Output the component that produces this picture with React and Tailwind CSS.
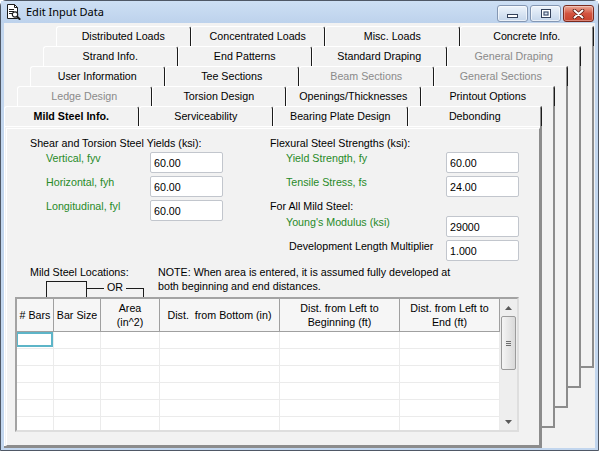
import clsx from 'clsx';

const tabRows = [
  [{ label: 'Distributed Loads' }, { label: 'Concentrated Loads' }, { label: 'Misc. Loads' }, { label: 'Concrete Info.' }],
  [{ label: 'Strand Info.' }, { label: 'End Patterns' }, { label: 'Standard Draping' }, { label: 'General Draping', disabled: true }],
  [{ label: 'User Information' }, { label: 'Tee Sections' }, { label: 'Beam Sections', disabled: true }, { label: 'General Sections', disabled: true }],
  [{ label: 'Ledge Design', disabled: true }, { label: 'Torsion Design' }, { label: 'Openings/Thicknesses' }, { label: 'Printout Options' }],
  [{ label: 'Mild Steel Info.', active: true }, { label: 'Serviceability' }, { label: 'Bearing Plate Design' }, { label: 'Debonding' }],
];

const columns = [
  { w: 'w-[37px]', label: '# Bars' },
  { w: 'w-[47px]', label: 'Bar Size' },
  { w: 'w-[59px]', label: <>Area<br />(in^2)</> },
  { w: 'w-[120px]', label: 'Dist.\u00a0 from Bottom (in)' },
  { w: 'w-[120px]', label: <>Dist. from Left to<br />Beginning (ft)</> },
  { w: 'w-[100px]', label: <>Dist. from Left to<br />End (ft)</> },
];

const TitleBar = () => (
  <div className="flex h-[22px] items-start bg-gradient-to-b from-[#cddff4] to-[#bdd2ec]">
    {/* document + magnifier icon */}
    <svg className="ml-[4px] mt-[3px]" width="16" height="16" viewBox="0 0 16 16">
      <path d="M2.5 .5h7l3 3v11h-10z" fill="#fff" stroke="#1c1c1c" />
      <path d="M9.5 .5v3h3" fill="none" stroke="#1c1c1c" />
      <path d="M4 5.5h5M4 7.5h5M4 9.5h3" stroke="#1c1c1c" />
      <circle cx="10" cy="10.5" r="2.7" fill="#fff" stroke="#1c1c1c" strokeWidth="1.2" />
      <path d="M12 12.5l3.2 3.2" stroke="#1c1c1c" strokeWidth="2" />
    </svg>
    <div className="ml-[5px] pt-[3px] font-['Noto_Sans',sans-serif] text-[11px] leading-[16px] text-black">Edit Input Data</div>

    <div className="ml-auto mr-[4px] mt-[4px] flex gap-[2px]">
      <div className="flex h-[17px] w-[31px] items-end justify-center rounded-[3px] border border-[#8497b3] bg-gradient-to-b from-[#eef4fb] via-[#d9e5f3] to-[#c5d6eb] pb-[3px] shadow-[inset_0_0_0_1px_rgba(255,255,255,0.6)]">
        <svg width="11" height="4" viewBox="0 0 11 4">
          <rect x=".5" y=".5" width="10" height="3" fill="#fff" stroke="#33415a" />
        </svg>
      </div>
      <div className="flex h-[17px] w-[31px] items-center justify-center rounded-[3px] border border-[#8497b3] bg-gradient-to-b from-[#eef4fb] via-[#d9e5f3] to-[#c5d6eb] shadow-[inset_0_0_0_1px_rgba(255,255,255,0.6)]">
        <svg width="10" height="9" viewBox="0 0 10 9">
          <rect x=".5" y=".5" width="9" height="8" fill="none" stroke="#33415a" />
          <rect x="1.5" y="1.5" width="7" height="6" fill="none" stroke="#fff" />
          <rect x="3" y="3" width="4" height="3" fill="none" stroke="#33415a" />
        </svg>
      </div>
      <div className="flex h-[17px] w-[31px] items-center justify-center rounded-[3px] border border-[#7a2a1e] bg-gradient-to-b from-[#eaa897] via-[#d35440] to-[#c8432d] shadow-[inset_0_0_0_1px_rgba(255,255,255,0.35)]">
        <svg width="13" height="10" viewBox="0 0 13 10">
          <path d="M2.5 1.5l8 7M10.5 1.5l-8 7" stroke="#5a1a10" strokeWidth="3.6" strokeLinecap="round" />
          <path d="M2.5 1.5l8 7M10.5 1.5l-8 7" stroke="#fff" strokeWidth="2" strokeLinecap="round" />
        </svg>
      </div>
    </div>
  </div>
);

const TabRow = ({ tabs }) => (
  <div className="-mr-[2px] grid h-[20px] grid-cols-4">
    {tabs.map((tab) => (
      <div
        key={tab.label}
        className={clsx(
          'flex items-center justify-center whitespace-nowrap rounded-t-[3px] border-t border-r border-l border-t-white border-r-[#1c1c1c] border-l-white text-[10.7px] leading-[13px]',
          tab.disabled ? 'text-[#8a8a8a]' : 'text-black',
          tab.active && 'font-bold'
        )}
      >
        {tab.label}
      </div>
    ))}
  </div>
);

const Field = ({ label, value, labelWidth, indent = 'pl-[16px]', green = true }) => (
  <div className="flex h-[21px]">
    <div className={clsx(labelWidth, indent, 'leading-[13px]', green ? 'text-[#288a28]' : 'text-black')}>{label}</div>
    <input
      readOnly
      value={value}
      className="h-[21px] w-[73px] rounded-[2px] border border-[#c2c6cd] bg-white pl-[3px] text-[10.7px] text-black outline-none"
    />
  </div>
);

const Bracket = () => (
  <div className="ml-[16px] mt-[2px] flex h-[16px] items-start">
    <div className="h-[16px] w-[41px] border-t border-r border-l border-[#1c1c1c]" />
    <div className="mt-[7px] flex items-start">
      <div className="w-[17px] border-t border-[#1c1c1c]" />
      <span className="-mt-[7px] px-[3px] leading-[13px]">OR</span>
      <div className="h-[9px] w-[18px] border-t border-r border-[#1c1c1c]" />
    </div>
  </div>
);

const LocationsTable = () => (
  <div className="flex h-[135px] w-[504px] border-2 border-t-[#a3a3a3] border-r-[#dedede] border-b-[#dedede] border-l-[#a3a3a3]">
    <div className="flex flex-col overflow-hidden">
      <div className="flex h-[33px] shrink-0 border-b border-[#a0a0a0] bg-[#f6f6f6]">
        {columns.map((col, i) => (
          <div key={i} className={clsx(col.w, 'flex shrink-0 items-center justify-center border-r border-[#a0a0a0] text-center leading-[14px]')}>
            {col.label}
          </div>
        ))}
      </div>
      {[0, 1, 2, 3, 4, 5].map((row) => (
        <div key={row} className="flex h-[17px] shrink-0 border-b border-[#ebebeb] bg-white">
          {columns.map((col, i) => (
            <div key={i} className={clsx(col.w, 'shrink-0 border-r border-[#ebebeb]')}>
              {row === 0 && i === 0 && <div className="-ml-[1px] h-[15px] w-[37px] border-2 border-[#5db5c8]" />}
            </div>
          ))}
        </div>
      ))}
    </div>

    {/* vertical scrollbar */}
    <div className="flex w-[17px] shrink-0 flex-col bg-[#eeeeee]">
      <div className="flex h-[17px] items-center justify-center">
        <svg width="7" height="4" viewBox="0 0 7 4"><path d="M0 4L3.5 0 7 4z" fill="#5a5a5a" /></svg>
      </div>
      <div className="mx-[1px] flex h-[54px] items-center justify-center rounded-[2px] border border-[#9b9b9b] bg-gradient-to-r from-[#f5f5f5] to-[#d9d9d9]">
        <div className="flex w-[5px] flex-col gap-[1px]">
          <div className="h-px bg-[#6e6e6e]" />
          <div className="h-px bg-[#6e6e6e]" />
          <div className="h-px bg-[#6e6e6e]" />
        </div>
      </div>
      <div className="flex-1" />
      <div className="flex h-[17px] items-center justify-center">
        <svg width="7" height="4" viewBox="0 0 7 4"><path d="M0 0L3.5 4 7 0z" fill="#5a5a5a" /></svg>
      </div>
    </div>
  </div>
);

const MildSteelPanel = () => (
  <div className="h-[320px] border-t border-l border-white">
    <div className="ml-[1px] mt-[1px] h-[318px] border border-t-white border-r-[#8c8c8c] border-b-[#8c8c8c] border-l-white px-[8px] pt-[8px] text-[10.7px] text-black">
      <div className="flex pl-[15px]">
        <div className="flex w-[240px] flex-col gap-[3px]">
          <div className="h-[12px] leading-[12px]">Shear and Torsion Steel Yields (ksi):</div>
          <Field label="Vertical, fyv" value="60.00" labelWidth="w-[120px]" />
          <Field label="Horizontal, fyh" value="60.00" labelWidth="w-[120px]" />
          <Field label="Longitudinal, fyl" value="60.00" labelWidth="w-[120px]" />
        </div>
        <div className="flex flex-col gap-[3px]">
          <div className="h-[12px] leading-[12px]">Flexural Steel Strengths (ksi):</div>
          <Field label="Yield Strength, fy" value="60.00" labelWidth="w-[176px]" />
          <Field label="Tensile Stress, fs" value="24.00" labelWidth="w-[176px]" />
          <div className="h-[13px] leading-[13px]">For All Mild Steel:</div>
          <Field label="Young's Modulus (ksi)" value="29000" labelWidth="w-[176px]" />
          <Field label="Development Length Multiplier" value="1.000" labelWidth="w-[176px]" indent="pl-[19px]" green={false} />
        </div>
      </div>

      <div className="mt-[4px] flex pl-[15px]">
        <div className="w-[128px]">
          <div className="h-[14px] leading-[14px]">Mild Steel Locations:</div>
          <Bracket />
        </div>
        <div className="leading-[14px]">
          NOTE: When area is entered, it is assumed fully developed at
          <br />
          both beginning and end distances.
        </div>
      </div>

      <LocationsTable />
    </div>
  </div>
);

const Page = ({ level }) => {
  const isFront = level === tabRows.length - 1;
  return (
    <div className={clsx('h-[342px] w-[538px] border-r-2 border-b-2 border-[#8c8c8c] bg-[#f2f2f2]', level === 0 ? 'ml-[52px]' : '-ml-[13px]')}>
      <TabRow tabs={tabRows[level]} />
      {isFront ? <MildSteelPanel /> : <Page level={level + 1} />}
    </div>
  );
};

export default function App() {
  return (
    <div className="h-[451px] w-[599px] font-['Liberation_Sans',Arial,sans-serif]">
      <div className="flex h-full w-full flex-col rounded-t-[6px] border border-[#4f5866] bg-[#c2d6ee]">
        <TitleBar />
        <div className="mx-[3px] h-[425px] bg-[#f2f2f2] pt-[3px]">
          <Page level={0} />
        </div>
      </div>
    </div>
  );
}
